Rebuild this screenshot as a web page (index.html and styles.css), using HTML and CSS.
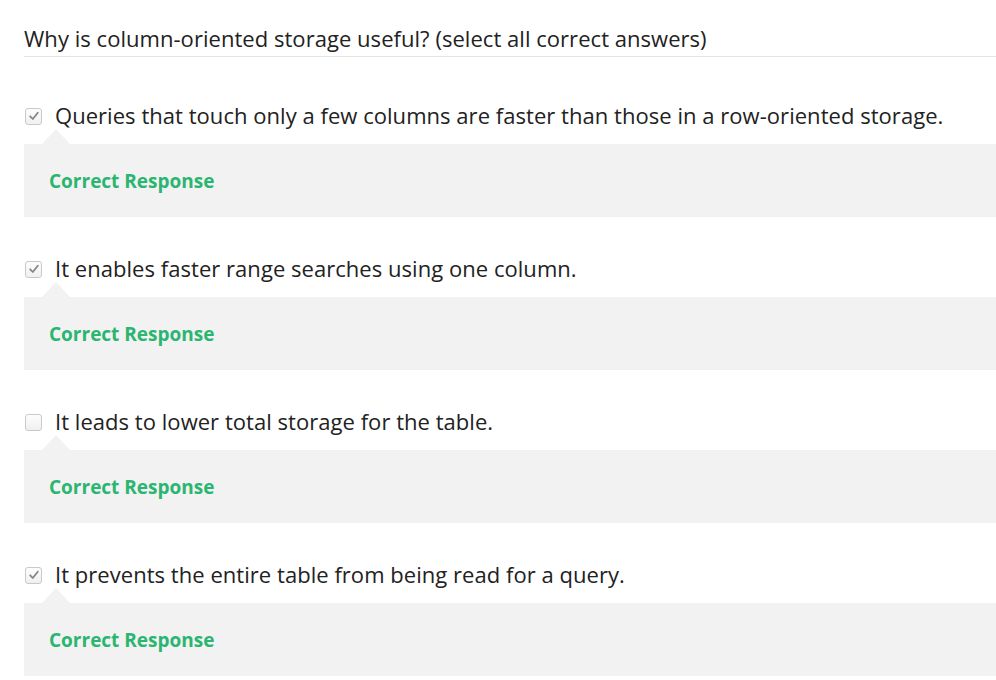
FILE: index.html
```html
<!DOCTYPE html>
<html>
<head>
<meta charset="utf-8">
<link rel="stylesheet" href="styles.css">
</head>
<body>
<div class="quiz">
  <h2 class="question">Why is column-oriented storage useful? (select all correct answers)</h2>
  <div class="options">
    <div class="option">
      <label class="choice">
        <span class="check checked"><svg viewBox="0 0 16 16" width="16" height="16"><path d="M4.2 8.3 L6.8 11 L11.8 4.8" fill="none" stroke="#868686" stroke-width="1.8" stroke-linecap="round" stroke-linejoin="round"/></svg></span>
        <span class="label">Queries that touch only a few columns are faster than those in a row-oriented storage.</span>
      </label>
      <div class="feedback"><span class="result">Correct Response</span></div>
    </div>
    <div class="option">
      <label class="choice">
        <span class="check checked"><svg viewBox="0 0 16 16" width="16" height="16"><path d="M4.2 8.3 L6.8 11 L11.8 4.8" fill="none" stroke="#868686" stroke-width="1.8" stroke-linecap="round" stroke-linejoin="round"/></svg></span>
        <span class="label">It enables faster range searches using one column.</span>
      </label>
      <div class="feedback"><span class="result">Correct Response</span></div>
    </div>
    <div class="option">
      <label class="choice">
        <span class="check"></span>
        <span class="label">It leads to lower total storage for the table.</span>
      </label>
      <div class="feedback"><span class="result">Correct Response</span></div>
    </div>
    <div class="option">
      <label class="choice">
        <span class="check checked"><svg viewBox="0 0 16 16" width="16" height="16"><path d="M4.2 8.3 L6.8 11 L11.8 4.8" fill="none" stroke="#868686" stroke-width="1.8" stroke-linecap="round" stroke-linejoin="round"/></svg></span>
        <span class="label">It prevents the entire table from being read for a query.</span>
      </label>
      <div class="feedback"><span class="result">Correct Response</span></div>
    </div>
  </div>
</div>
</body>
</html>
```

FILE: styles.css
```css
html, body {
  margin: 0;
  padding: 0;
  background: #ffffff;
}
body {
  font-family: "Open Sans", "Liberation Sans", sans-serif;
  color: #222222;
}
.quiz {
  padding-left: 24px;
}
.question {
  margin: 24px 0 0 0;
  padding-bottom: 4px;
  font-size: 22px;
  line-height: 28px;
  font-weight: 400;
  letter-spacing: 0.04px;
  color: #222;
  border-bottom: 1px solid #e4e4e4;
}
.options {
  display: flex;
  flex-direction: column;
  gap: 37px;
  padding-top: 44px;
}
.option {
  display: flex;
  flex-direction: column;
}
.choice {
  display: flex;
  align-items: center;
  height: 28px;
  font-size: 22px;
  line-height: 28px;
  letter-spacing: 0.04px;
  color: #222;
}
.check {
  box-sizing: border-box;
  width: 17px;
  height: 17px;
  margin-left: 1px;
  margin-right: 13px;
  margin-top: 2px;
  border: 1px solid #c9c9c9;
  border-radius: 3px;
  background: linear-gradient(#fdfdfd, #f0f0f0);
  display: flex;
  align-items: center;
  justify-content: center;
}
.check svg {
  display: block;
  margin: -1px;
}
.feedback {
  position: relative;
  margin-top: 15px;
  height: 73px;
  background: #f2f2f2;
  display: flex;
  align-items: center;
  padding-left: 25px;
}
.feedback::before {
  content: "";
  position: absolute;
  left: 18px;
  top: -15px;
  width: 0;
  height: 0;
  border-left: 14px solid transparent;
  border-right: 14px solid transparent;
  border-bottom: 15px solid #f2f2f2;
}
.result {
  font-size: 19px;
  font-weight: 700;
  color: #2ab571;
  line-height: 24px;
}
```
